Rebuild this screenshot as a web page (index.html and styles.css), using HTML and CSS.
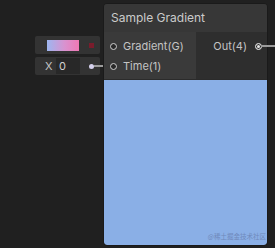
FILE: index.html
```html
<!DOCTYPE html>
<html lang="en">
<head>
    <meta charset="UTF-8">
    <meta name="viewport" content="width=device-width, initial-scale=1.0">
    <title>Sample Gradient</title>
    <link rel="stylesheet" href="styles.css">
</head>
<body>
    <div class="graph">
        <!-- inline input fields on the left -->
        <div class="field field-gradient">
            <div class="swatch"></div>
            <div class="mode"></div>
        </div>

        <div class="field field-x">
            <span class="axis">X</span>
            <span class="value">0</span>
            <span class="field-dot"></span>
        </div>
        <div class="wire wire-time"></div>

        <div class="node">
            <div class="node-title">Sample Gradient</div>
            <div class="ports">
                <div class="inputs">
                    <div class="port-row">
                        <span class="port"></span>
                        <span class="port-label">Gradient(G)</span>
                    </div>
                    <div class="port-row">
                        <span class="port"></span>
                        <span class="port-label">Time(1)</span>
                    </div>
                </div>
                <div class="outputs">
                    <div class="port-row out">
                        <span class="port-label">Out(4)</span>
                        <span class="port connected"></span>
                    </div>
                </div>
            </div>
            <div class="preview">
                <span class="watermark">@稀土掘金技术社区</span>
            </div>
        </div>
        <div class="wire wire-out"></div>
    </div>
</body>
</html>
```

FILE: styles.css
```css
body {
    margin: 0;
    background-color: #202020;
    font-family: Inter, 'Noto Sans', sans-serif;
    overflow: hidden;
}

.graph {
    position: relative;
    width: 275px;
    height: 248px;
}

/* fields */
.field {
    position: absolute;
    left: 35px;
    width: 65px;
    height: 18px;
    background-color: #333333;
    border-radius: 2px;
    display: flex;
    align-items: center;
}

.field-gradient {
    top: 36px;
}

.swatch {
    margin-left: 12px;
    width: 32px;
    height: 11px;
    background: linear-gradient(to right, #9db6f0, #d992cf 55%, #f078b4);
}

.mode {
    margin-left: 10px;
    width: 5px;
    height: 5px;
    background-color: #7a1c2c;
}

.field-x {
    top: 57px;
}

.axis {
    margin-left: 10px;
    width: 11px;
    color: #c4c4c4;
    font-size: 11px;
}

.value {
    width: 21px;
    height: 16px;
    line-height: 16px;
    padding-left: 3px;
    background-color: #282828;
    color: #d0d0d0;
    font-size: 11px;
}

.field-dot {
    margin-left: 9px;
    width: 5px;
    height: 5px;
    border-radius: 50%;
    background-color: #d6d2ee;
}

.wire {
    position: absolute;
    height: 2px;
    background-color: #9b9b9b;
}

.wire-time {
    left: 94px;
    top: 65px;
    width: 17px;
}

.wire-out {
    left: 261px;
    top: 45px;
    width: 14px;
}

/* node */
.node {
    position: absolute;
    left: 103px;
    top: 3px;
    width: 163px;
    height: 241px;
    border: 1px solid #1a1a1a;
    border-radius: 4px;
    background-color: #2b2b2b;
    display: flex;
    flex-direction: column;
    overflow: hidden;
}

.node-title {
    height: 28px;
    line-height: 28px;
    padding-left: 7px;
    background-color: #373737;
    color: #cbcbcb;
    font-size: 12px;
}

.ports {
    display: flex;
    height: 47px;
}

.inputs {
    width: 92px;
    padding-top: 4px;
    background-color: #3a3a3a;
}

.outputs {
    flex: 1;
    padding-top: 4px;
    background-color: #2e2e2e;
}

.port-row {
    height: 20px;
    display: flex;
    align-items: center;
    gap: 6px;
    padding-left: 6px;
}

.port-row.out {
    justify-content: flex-end;
    padding-left: 0;
    padding-right: 5px;
    gap: 8px;
}

.port {
    width: 5px;
    height: 5px;
    border: 1px solid #cfcfcf;
    border-radius: 50%;
    background-color: #2a2a2a;
}

.port.connected {
    background-color: #e6e6e6;
    box-shadow: inset 0 0 0 1px #2a2a2a;
}

.port-label {
    color: #c4c4c4;
    font-size: 11px;
}

.preview {
    position: relative;
    flex: 1;
    margin-top: 1px;
    background-color: #8aafe6;
    border-radius: 0 0 3px 3px;
}

.watermark {
    position: absolute;
    right: 1px;
    bottom: 4px;
    color: #6f89bb;
    font-family: 'Noto Sans CJK SC', sans-serif;
    font-size: 6.5px;
}
```
